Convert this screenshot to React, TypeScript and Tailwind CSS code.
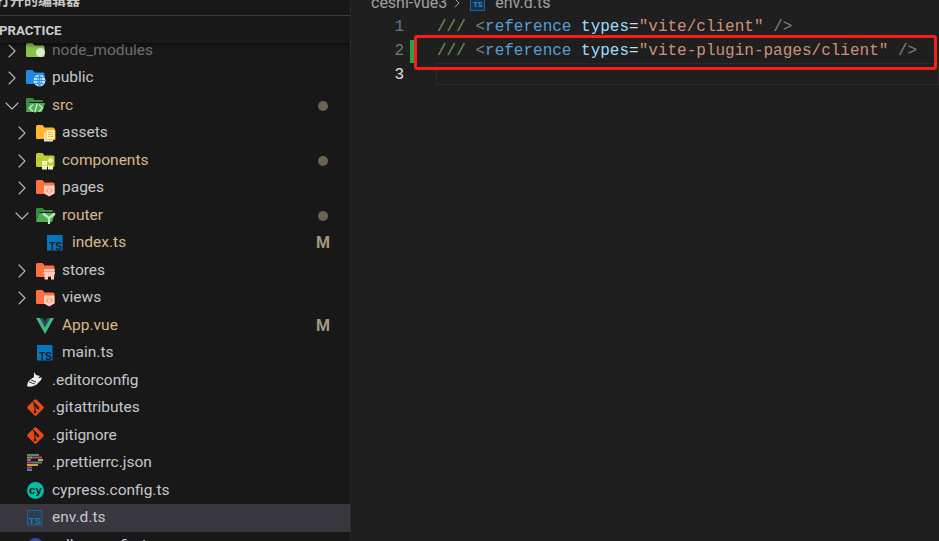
import React from 'react';
import { ChevronRight, ChevronDown } from 'lucide-react';

type IconName =
  | 'node' | 'public' | 'src' | 'assets' | 'components' | 'pages' | 'router' | 'stores'
  | 'vue' | 'ts' | 'tsDim' | 'editorconfig' | 'git' | 'prettier' | 'cypress' | 'tail';

interface TreeRow {
  name: string;
  icon: IconName;
  depth: string;
  arrow?: 'right' | 'down';
  color: string;
  badge?: 'dot' | 'M';
  active?: boolean;
}

const GOLD = 'text-[#d9b98a]';
const GRAY = 'text-[#c4c7cb]';

const rows: TreeRow[] = [
  { name: 'node_modules', icon: 'node', depth: 'pl-[4px]', arrow: 'right', color: 'text-[#6e6e6e]' },
  { name: 'public', icon: 'public', depth: 'pl-[4px]', arrow: 'right', color: GRAY },
  { name: 'src', icon: 'src', depth: 'pl-[4px]', arrow: 'down', color: GOLD, badge: 'dot' },
  { name: 'assets', icon: 'assets', depth: 'pl-[14px]', arrow: 'right', color: GRAY },
  { name: 'components', icon: 'components', depth: 'pl-[14px]', arrow: 'right', color: GOLD, badge: 'dot' },
  { name: 'pages', icon: 'pages', depth: 'pl-[14px]', arrow: 'right', color: GRAY },
  { name: 'router', icon: 'router', depth: 'pl-[14px]', arrow: 'down', color: GOLD, badge: 'dot' },
  { name: 'index.ts', icon: 'ts', depth: 'pl-[24px]', color: GOLD, badge: 'M' },
  { name: 'stores', icon: 'stores', depth: 'pl-[14px]', arrow: 'right', color: GRAY },
  { name: 'views', icon: 'pages', depth: 'pl-[14px]', arrow: 'right', color: GRAY },
  { name: 'App.vue', icon: 'vue', depth: 'pl-[14px]', color: GOLD, badge: 'M' },
  { name: 'main.ts', icon: 'ts', depth: 'pl-[14px]', color: GRAY },
  { name: '.editorconfig', icon: 'editorconfig', depth: 'pl-[4px]', color: GRAY },
  { name: '.gitattributes', icon: 'git', depth: 'pl-[4px]', color: GRAY },
  { name: '.gitignore', icon: 'git', depth: 'pl-[4px]', color: GRAY },
  { name: '.prettierrc.json', icon: 'prettier', depth: 'pl-[4px]', color: GRAY },
  { name: 'cypress.config.ts', icon: 'cypress', depth: 'pl-[4px]', color: GRAY },
  { name: 'env.d.ts', icon: 'tsDim', depth: 'pl-[4px]', color: GRAY, active: true },
  { name: 'rollup.config.ts', icon: 'tail', depth: 'pl-[4px]', color: GRAY },
];

function FolderBase({ fill }: { fill: string }) {
  return <path d="M0 3.5 Q0 2 1.5 2 H6.5 L8.5 4.5 H17 Q18.5 4.5 18.5 6 V15 Q18.5 16 17 16 H1.5 Q0 16 0 15 Z" fill={fill} />;
}

function FileIcon({ icon }: { icon: IconName }) {
  switch (icon) {
    case 'node':
      return (
        <svg width="20" height="20" viewBox="0 0 20 20">
          <FolderBase fill="#8bc34a" />
          <circle cx="14.5" cy="11.5" r="4.5" fill="#dcedc8" />
        </svg>
      );
    case 'public':
      return (
        <svg width="20" height="20" viewBox="0 0 20 20">
          <FolderBase fill="#1e88e5" />
          <circle cx="13.5" cy="12.5" r="6" fill="#bbdefb" />
          <path d="M7.5 12.5 H19.5 M8.5 9.5 H18.5 M8.5 15.5 H18.5 M13.5 6.5 V18.5 M13.5 6.5 Q9.5 12.5 13.5 18.5 M13.5 6.5 Q17.5 12.5 13.5 18.5" stroke="#1e88e5" strokeWidth="0.8" fill="none" />
        </svg>
      );
    case 'src':
      return (
        <svg width="20" height="20" viewBox="0 0 20 20">
          <path d="M0 3 Q0 2 1.5 2 H6.5 L8.5 4 H16 Q17 4 17 5 V6 H3.5 L0 15 Z" fill="#388e3c" />
          <path d="M3 7 H19 L16 16 H0 Z" fill="#4caf50" />
          <path d="M7 8.5 L3.5 12 L7 15.5 M13 8.5 L16.5 12 L13 15.5 M11.2 7.5 L8.8 16.5" stroke="#c8e6c9" strokeWidth="1.4" fill="none" />
        </svg>
      );
    case 'assets':
      return (
        <svg width="20" height="20" viewBox="0 0 20 20">
          <FolderBase fill="#ffb92e" />
          <rect x="8" y="9.5" width="9" height="9" fill="#f2e6c2" />
          <rect x="10" y="7" width="9" height="9.5" fill="#fff3cd" stroke="#ffb92e" strokeWidth="0.8" />
          <path d="M12 9.5 H17.5 M12 11.5 H17.5 M12 13.5 H17.5" stroke="#ffb92e" strokeWidth="0.9" />
        </svg>
      );
    case 'components':
      return (
        <svg width="20" height="20" viewBox="0 0 20 20">
          <FolderBase fill="#c0ca33" />
          <rect x="6" y="10" width="5" height="4" fill="#f0f4c3" />
          <rect x="6" y="14.5" width="5" height="4" fill="#f0f4c3" />
          <rect x="12" y="14.5" width="5" height="4" fill="#f0f4c3" />
          <path d="M14.5 6.5 L17.5 9.5 L14.5 12.5 L11.5 9.5 Z" fill="#f0f4c3" />
        </svg>
      );
    case 'pages':
      return (
        <svg width="20" height="20" viewBox="0 0 20 20">
          <FolderBase fill="#ff7043" />
          <path d="M8 7.5 H18.5 V15.5 L13.2 18.5 L8 15.5 Z" fill="#ffccbc" />
          <path d="M12.3 10.5 L10.5 12.5 L12.3 14.5 M14.3 10.5 L16.1 12.5 L14.3 14.5" stroke="#ff7043" strokeWidth="1" fill="none" />
        </svg>
      );
    case 'router':
      return (
        <svg width="20" height="20" viewBox="0 0 20 20">
          <path d="M0 3 Q0 2 1.5 2 H6.5 L8.5 4 H16 Q17 4 17 5 V6 H3.5 L0 15 Z" fill="#388e3c" />
          <path d="M3 7 H19 L16 16 H0 Z" fill="#4caf50" />
          <path d="M7 7.5 L13 12 M19 7.5 L13 12 V18" stroke="#c8e6c9" strokeWidth="2.2" fill="none" />
        </svg>
      );
    case 'stores':
      return (
        <svg width="20" height="20" viewBox="0 0 20 20">
          <FolderBase fill="#ff7043" />
          <rect x="8" y="8" width="10.5" height="2.5" fill="#ffccbc" />
          <rect x="7.5" y="11" width="11.5" height="2" fill="#ffccbc" />
          <path d="M8.5 13 H18 V18.5 H15 V15 H12 V18.5 H8.5 Z" fill="#ffccbc" />
        </svg>
      );
    case 'vue':
      return (
        <svg width="20" height="20" viewBox="0 0 20 20">
          <path d="M0 2 H4 L9 11 L14 2 H18 L9 18 Z" fill="#41b883" />
          <path d="M4 2 H7 L9 5.5 L11 2 H14 L9 11 Z" fill="#35495e" />
        </svg>
      );
    case 'ts':
      return (
        <svg width="20" height="20" viewBox="0 0 20 20">
          <rect x="1" y="2" width="15.5" height="15.5" fill="#0277bd" />
          <text x="16" y="16.5" textAnchor="end" fontFamily="'Liberation Sans', sans-serif" fontWeight="700" fontSize="10" fill="#1c1c1c">TS</text>
        </svg>
      );
    case 'tsDim':
      return (
        <svg width="20" height="20" viewBox="0 0 20 20">
          <rect x="1.5" y="2.5" width="14.5" height="14.5" fill="#2b3f50" stroke="#1f6494" strokeWidth="1" />
          <text x="15" y="15.5" textAnchor="end" fontFamily="'Liberation Sans', sans-serif" fontWeight="700" fontSize="9.5" fill="#1f7ab8">TS</text>
        </svg>
      );
    case 'editorconfig':
      return (
        <svg width="20" height="20" viewBox="0 0 20 20">
          <path d="M8 1 L10 4 L14 5 L12 7 L16 6.5 L15 9 L10 14 Q4 17 1 15 L2 11 L5 8 L8 6 Z" fill="#f0f0f0" />
          <path d="M3 11 L9 13 M5 9 L10 11" stroke="#222" strokeWidth="0.9" />
        </svg>
      );
    case 'git':
      return (
        <svg width="20" height="20" viewBox="0 0 20 20">
          <rect x="3.2" y="3.2" width="12.6" height="12.6" rx="1.6" transform="rotate(45 9.5 9.5)" fill="#e64a19" />
          <path d="M7 4 L12 9 M9 7 V14 M9 7 L12 10" stroke="#1a1a1a" strokeWidth="1.1" fill="none" />
          <circle cx="9" cy="7" r="1.3" fill="#1a1a1a" />
          <circle cx="12" cy="10" r="1.3" fill="#1a1a1a" />
          <circle cx="9" cy="14" r="1.3" fill="#1a1a1a" />
        </svg>
      );
    case 'prettier':
      return (
        <svg width="20" height="20" viewBox="0 0 20 20">
          <path d="M1 2 H9 M9 2 H13" stroke="#4a8f7f" strokeWidth="2" />
          <path d="M1 4.5 H6" stroke="#d08a3c" strokeWidth="2" />
          <path d="M6 4.5 H16" stroke="#b04a6c" strokeWidth="2" />
          <path d="M1 7 H5" stroke="#5b7fb0" strokeWidth="2" />
          <path d="M12 7 H17" stroke="#c9a23c" strokeWidth="2" />
          <path d="M1 9.5 H7" stroke="#b04a6c" strokeWidth="2" />
          <path d="M7 9.5 H16" stroke="#4a8f7f" strokeWidth="2" />
          <path d="M1 12 H12" stroke="#c9a23c" strokeWidth="2" />
          <path d="M1 14.5 H6" stroke="#b04a6c" strokeWidth="2" />
          <path d="M1 17 H6" stroke="#5b7fb0" strokeWidth="2" />
        </svg>
      );
    case 'cypress':
      return (
        <svg width="20" height="20" viewBox="0 0 20 20">
          <circle cx="9.5" cy="9.5" r="8.5" fill="#00bfa5" />
          <text x="9.5" y="13" textAnchor="middle" fontFamily="'Liberation Sans', sans-serif" fontWeight="700" fontSize="11.5" fill="#1a1a1a">cy</text>
        </svg>
      );
    case 'tail':
      return (
        <svg width="20" height="20" viewBox="0 0 20 20">
          <circle cx="9.5" cy="10" r="8" fill="#3949ab" />
        </svg>
      );
  }
}

function Row({ row }: { row: TreeRow }) {
  return (
    <div className={`flex h-[27.5px] shrink-0 items-center pr-[17px] text-[15.5px] ${row.depth} ${row.color} ${row.active ? 'bg-[#37373d]' : ''}`}>
      <span className="flex w-[22px] shrink-0 items-center text-[#b5b8bc]">
        {row.arrow === 'right' && <ChevronRight size={24} strokeWidth={1.1} className="-ml-[4.5px]" />}
        {row.arrow === 'down' && <ChevronDown size={24} strokeWidth={1.1} className="-ml-[4.5px]" />}
      </span>
      <span className="w-[26px] shrink-0">
        <FileIcon icon={row.icon} />
      </span>
      <span className="whitespace-nowrap">{row.name}</span>
      {row.badge === 'dot' && (
        <span className="ml-auto flex w-[20px] justify-center">
          <span className="h-[10px] w-[10px] rounded-full bg-[#6b6252]" />
        </span>
      )}
      {row.badge === 'M' && (
        <span className="ml-auto w-[20px] text-center text-[16px] font-bold text-[#a3977d]">M</span>
      )}
    </div>
  );
}

function CodeLine({ no, current, children }: { no: number; current?: boolean; children?: React.ReactNode }) {
  return (
    <div className="flex h-[24px] items-center">
      <span className={`w-[53px] shrink-0 text-right ${current ? 'text-[#e0e0e0]' : 'text-[#6e7681]'}`}>{no}</span>
      <span className="ml-[33px] whitespace-pre">{children}</span>
    </div>
  );
}

function ReferenceTag({ path }: { path: string }) {
  return (
    <>
      <span className="text-[#6a9955]">///</span>
      <span> </span>
      <span className="text-[#808080]">&lt;</span>
      <span className="text-[#569cd6]">reference</span>
      <span> </span>
      <span className="text-[#9cdcfe]">types</span>
      <span className="text-[#d4d4d4]">=</span>
      <span className="text-[#ce9178]">"{path}"</span>
      <span> </span>
      <span className="text-[#808080]">/&gt;</span>
    </>
  );
}

export default function App() {
  return (
    <div className="flex h-[541px] w-[939px] overflow-hidden bg-[#1f1f1f] font-['Roboto','Noto_Sans_CJK_SC',sans-serif]">
      <aside className="flex w-[351px] shrink-0 flex-col overflow-hidden border-r border-[#2b2b2b] bg-[#181818]">
        <div className="relative z-10 bg-[#181818] shadow-[0_2px_4px_rgba(0,0,0,0.5)]">
          <div className="flex h-[16px] items-end overflow-hidden border-b border-[#3a3a3a]">
            <span className="-ml-[4px] mb-[7px] whitespace-nowrap text-[14px] leading-[16px] font-bold text-[#c8c8c8]">打开的编辑器</span>
          </div>
          <div className="flex h-[27px] items-center pt-[2px]">
            <span className="-ml-[1px] text-[13.25px] font-bold text-[#cccccc]">PRACTICE</span>
          </div>
        </div>
        <div className="-mt-[6.25px] flex flex-col">
          {rows.map(row => (
            <Row key={row.name} row={row} />
          ))}
        </div>
      </aside>

      <main className="relative min-w-0 flex-1 overflow-hidden font-['Liberation_Mono',monospace] text-[16px]">
        <div className="flex h-[14px] items-end overflow-hidden pl-[20px] font-['Roboto',sans-serif] text-[16px] leading-[14px] text-[#a0a0a0]">
          <span className="mb-[3px] flex items-center whitespace-nowrap">
            ceshi-vue3
            <ChevronRight size={16} strokeWidth={1.5} className="mx-[2px]" />
            <span className="mx-[3px] inline-flex h-[15px] w-[15px] items-end justify-center border border-[#1f6494] bg-[#12324a] text-[8px] leading-[10px] font-bold text-[#2a8fd0]">TS</span>
            <span className="ml-[7px]">env.d.ts</span>
          </span>
        </div>
        <div className="pt-[1px]">
          <CodeLine no={1}><ReferenceTag path="vite/client" /></CodeLine>
          <CodeLine no={2}><ReferenceTag path="vite-plugin-pages/client" /></CodeLine>
          <CodeLine no={3} current />
        </div>
        {/* current line outline, git gutter bar, and the red annotation box */}
        <div className="absolute top-[63px] right-0 left-[85px] h-[22px] border border-[#2a2a2a]" />
        <div className="absolute top-[40px] left-[59px] h-[23px] w-[4px] bg-[#2ea043]" />
        <div className="absolute top-[35px] right-[2px] left-[63px] h-[35px] rounded-[3px] border-[3px] border-[#f5201a]" />
      </main>
    </div>
  );
}
